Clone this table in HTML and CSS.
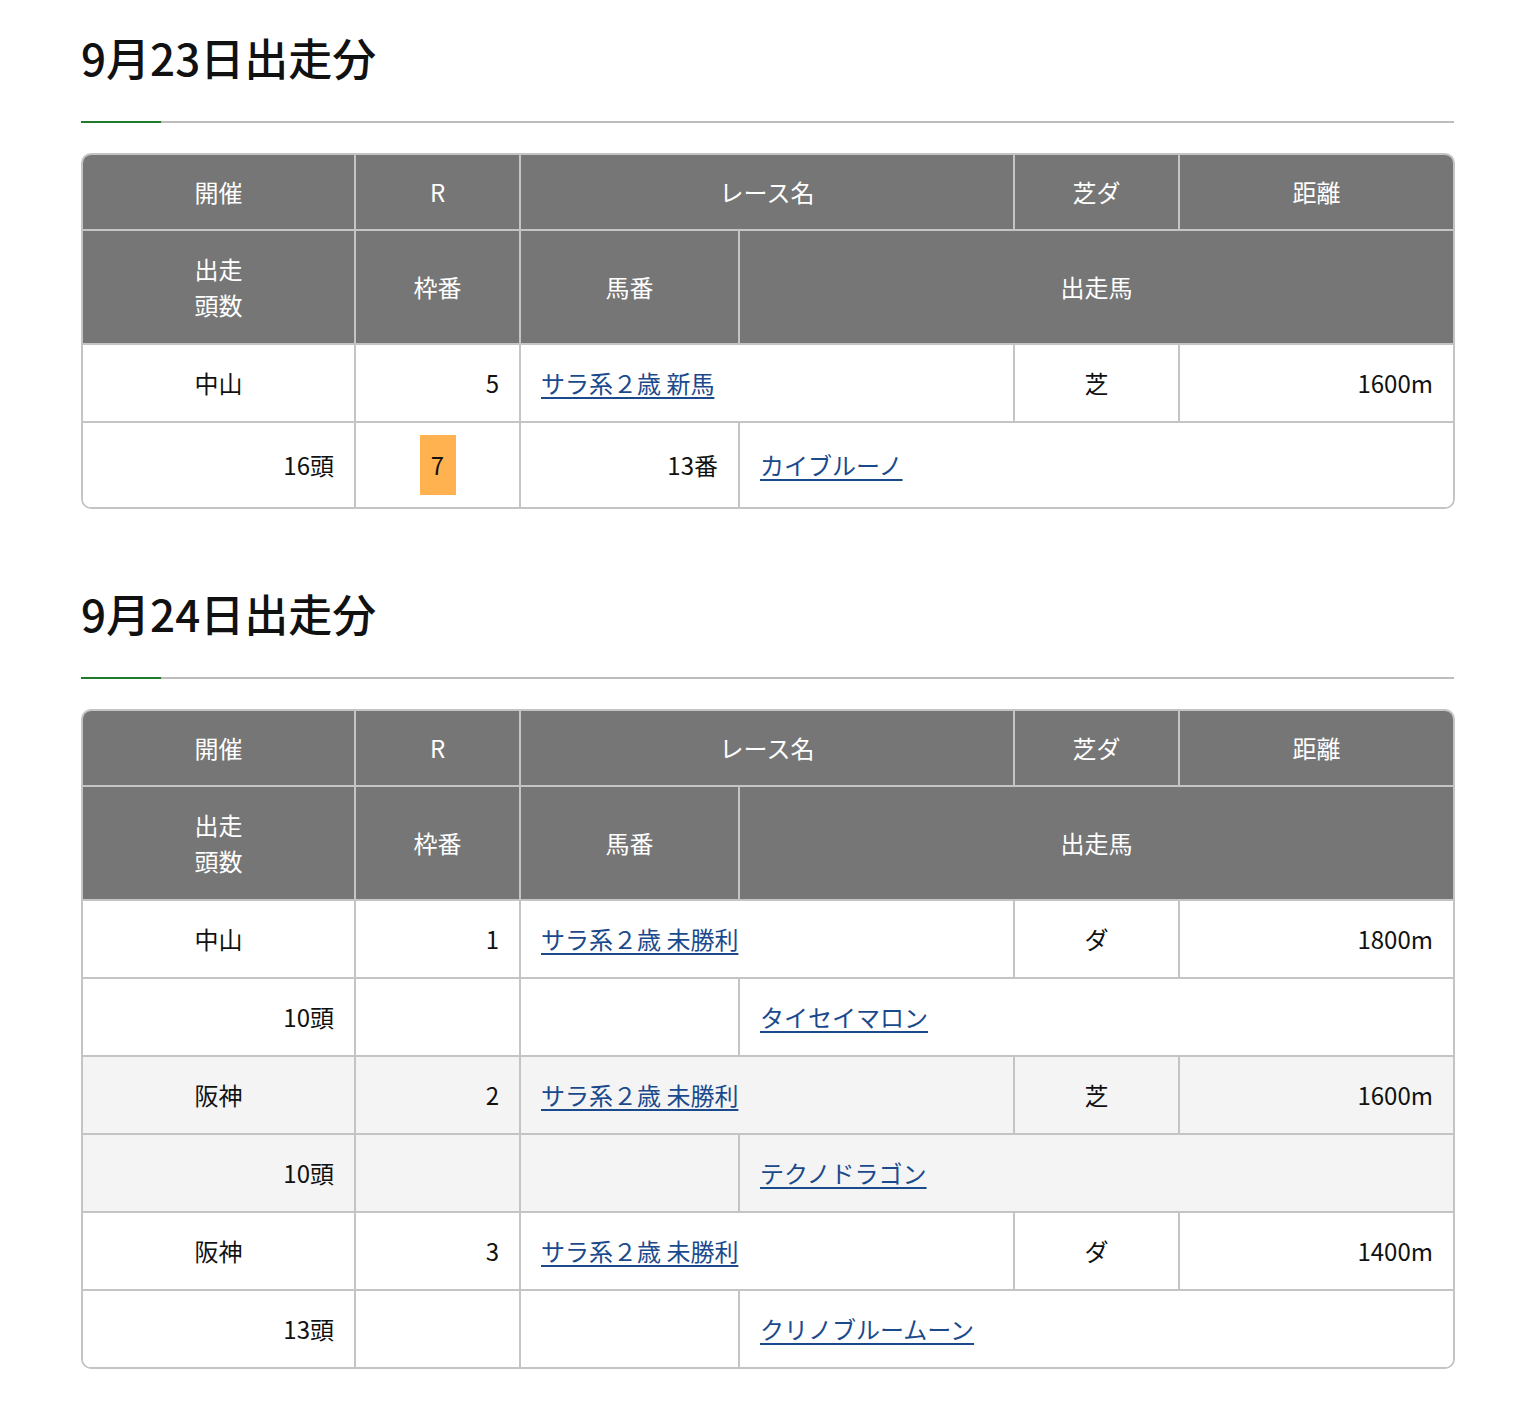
FILE: index.html
```html
<!DOCTYPE html>
<html lang="ja">
<head>
<meta charset="utf-8">
<title>出走分</title>
<link rel="stylesheet" href="styles.css">
</head>
<body>
<main class="page">
  <section class="day">
    <h2 class="day-title">9月23日出走分</h2>
    <div class="rule"></div>
    <div class="table-wrap">
      <table class="race-table">
        <colgroup>
          <col class="c1"><col class="c2"><col class="c3"><col class="c4"><col class="c5"><col class="c6">
        </colgroup>
        <thead>
          <tr>
            <th>開催</th>
            <th>R</th>
            <th colspan="2">レース名</th>
            <th>芝ダ</th>
            <th>距離</th>
          </tr>
          <tr>
            <th class="tall">出走<br>頭数</th>
            <th class="tall">枠番</th>
            <th class="tall">馬番</th>
            <th class="tall" colspan="3">出走馬</th>
          </tr>
        </thead>
        <tbody class="race">
          <tr>
            <td class="center">中山</td>
            <td class="right">5</td>
            <td colspan="2"><a href="#">サラ系２歳 新馬</a></td>
            <td class="center">芝</td>
            <td class="right">1600m</td>
          </tr>
          <tr>
            <td class="right badge-row">16頭</td>
            <td class="center badge-row"><span class="waku waku-7">7</span></td>
            <td class="right badge-row">13番</td>
            <td class="badge-row" colspan="3"><a href="#">カイブルーノ</a></td>
          </tr>
        </tbody>
      </table>
    </div>
  </section>

  <section class="day">
    <h2 class="day-title">9月24日出走分</h2>
    <div class="rule"></div>
    <div class="table-wrap">
      <table class="race-table">
        <colgroup>
          <col class="c1"><col class="c2"><col class="c3"><col class="c4"><col class="c5"><col class="c6">
        </colgroup>
        <thead>
          <tr>
            <th>開催</th>
            <th>R</th>
            <th colspan="2">レース名</th>
            <th>芝ダ</th>
            <th>距離</th>
          </tr>
          <tr>
            <th class="tall">出走<br>頭数</th>
            <th class="tall">枠番</th>
            <th class="tall">馬番</th>
            <th class="tall" colspan="3">出走馬</th>
          </tr>
        </thead>
        <tbody class="race">
          <tr>
            <td class="center">中山</td>
            <td class="right">1</td>
            <td colspan="2"><a href="#">サラ系２歳 未勝利</a></td>
            <td class="center">ダ</td>
            <td class="right">1800m</td>
          </tr>
          <tr>
            <td class="right">10頭</td>
            <td></td>
            <td></td>
            <td colspan="3"><a href="#">タイセイマロン</a></td>
          </tr>
        </tbody>
        <tbody class="race alt">
          <tr>
            <td class="center">阪神</td>
            <td class="right">2</td>
            <td colspan="2"><a href="#">サラ系２歳 未勝利</a></td>
            <td class="center">芝</td>
            <td class="right">1600m</td>
          </tr>
          <tr>
            <td class="right">10頭</td>
            <td></td>
            <td></td>
            <td colspan="3"><a href="#">テクノドラゴン</a></td>
          </tr>
        </tbody>
        <tbody class="race">
          <tr>
            <td class="center">阪神</td>
            <td class="right">3</td>
            <td colspan="2"><a href="#">サラ系２歳 未勝利</a></td>
            <td class="center">ダ</td>
            <td class="right">1400m</td>
          </tr>
          <tr>
            <td class="right">13頭</td>
            <td></td>
            <td></td>
            <td colspan="3"><a href="#">クリノブルームーン</a></td>
          </tr>
        </tbody>
      </table>
    </div>
  </section>
</main>
</body>
</html>
```

FILE: styles.css
```css
html, body {
  margin: 0;
  padding: 0;
  background: #ffffff;
}

body {
  font-family: "Noto Sans CJK JP", "Noto Sans", sans-serif;
  color: #111111;
}

.page {
  width: 1374px;
  margin-left: 81px;
  padding-top: 24px;
  padding-bottom: 60px;
}

.day + .day {
  margin-top: 71px;
}

.day-title {
  margin: 0;
  font-size: 44px;
  line-height: 66px;
  font-weight: 500;
  color: #111111;
  padding-bottom: 31px;
}

.rule {
  height: 2px;
  margin-right: 1px;
  background: linear-gradient(to right, #1f7a2e 0, #1f7a2e 80px, #bdbdbd 80px, #bdbdbd 100%);
  margin-bottom: 30px;
}

.table-wrap {
  border: 2px solid #c4c4c4;
  border-radius: 10px;
  overflow: hidden;
}

.race-table {
  width: 100%;
  border-collapse: collapse;
  table-layout: fixed;
  font-size: 24px;
  line-height: 36px;
}

.c1 { width: 272px; }
.c2 { width: 165px; }
.c3 { width: 219px; }
.c4 { width: 275px; }
.c5 { width: 165px; }
.c6 { width: auto; }

.race-table th,
.race-table td {
  border: 2px solid #c4c4c4;
  padding: 20px;
  font-weight: 400;
}

.race-table tr > *:first-child { border-left: none; }
.race-table tr > *:last-child { border-right: none; }
.race-table thead tr:first-child > * { border-top: none; padding-top: 19px; padding-bottom: 19px; }
.race-table tbody:last-child tr:last-child > * { border-bottom: none; }

.race-table th {
  background: #767676;
  color: #ffffff;
  text-align: center;
}

.race-table td {
  background: #ffffff;
  color: #111111;
}

.race-table .alt td {
  background: #f4f4f4;
}

.race-table td.right { text-align: right; }
.race-table td.center { text-align: center; }

.race-table td.badge-row {
  padding-top: 12px;
  padding-bottom: 12px;
}

.waku {
  display: inline-block;
  width: 36px;
  height: 60px;
  line-height: 60px;
  text-align: center;
  vertical-align: top;
  color: #111111;
}

.waku-7 {
  background: #ffb24f;
}

.race-table a {
  color: #1b4a8c;
  text-decoration: underline;
  text-underline-offset: 4px;
  text-decoration-thickness: 2px;
}
```
